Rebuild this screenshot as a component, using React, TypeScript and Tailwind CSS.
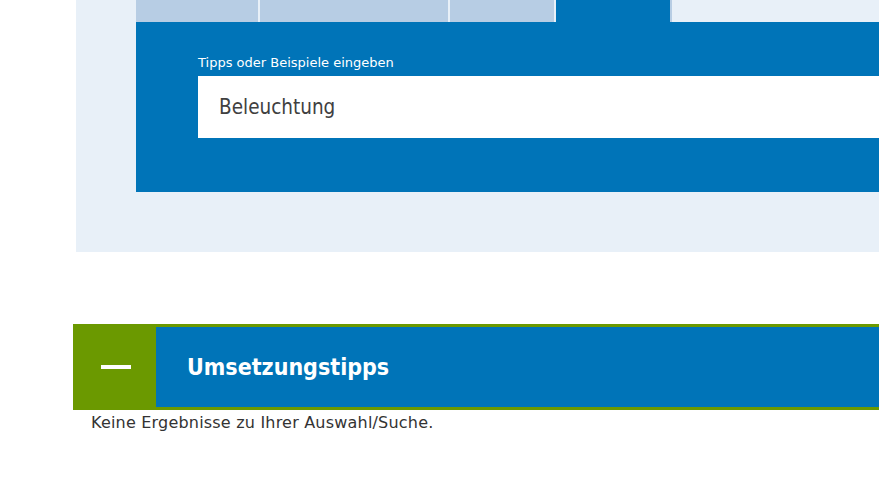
export default function App() {
  return (
    <div className="w-[879px] h-[481px] bg-white overflow-hidden" style={{ fontFamily: '"DejaVu Sans", sans-serif' }}>
      {/* Search panel */}
      <div className="ml-[76px] h-[252px] bg-[#e8f0f8] pl-[60px]">
        <div className="flex h-[22px] gap-[2px]">
          <div className="w-[122px] bg-[#b7cde4]" />
          <div className="w-[188px] bg-[#b7cde4]" />
          <div className="w-[104px] bg-[#b7cde4]" />
          <div className="w-[116px] bg-[#0074b8] border-r-2 border-[#b7cde4]" />
        </div>
        <div className="h-[170px] bg-[#0074b8] pt-[30px] pl-[62px]">
          <label className="block mb-[2px] text-[13px] leading-[22px] text-white">Tipps oder Beispiele eingeben</label>
          <div className="h-[62px] bg-white flex items-center pl-[21px]">
            <span className="text-[20.5px] font-medium text-[#404040]" style={{ fontFamily: '"DejaVu Sans Condensed", "DejaVu Sans", sans-serif' }}>
              Beleuchtung
            </span>
          </div>
        </div>
      </div>

      {/* Accordion */}
      <div className="mt-[72px] ml-[73px] h-[86px] bg-[#6b9900] flex">
        <div className="w-[83px] flex items-center pl-[28px]">
          <div className="w-[30px] h-[4px] bg-white" />
        </div>
        <div className="flex-1 my-[3px] bg-[#0074b8] flex items-center pl-[31px]">
          <h2 className="text-[23px] font-bold text-white" style={{ fontFamily: '"DejaVu Sans Condensed", "DejaVu Sans", sans-serif' }}>
            Umsetzungstipps
          </h2>
        </div>
      </div>
      <p className="ml-[91px] mt-[1px] text-[16px] tracking-[0.2px] text-[#333]">Keine Ergebnisse zu Ihrer Auswahl/Suche.</p>
    </div>
  );
}
